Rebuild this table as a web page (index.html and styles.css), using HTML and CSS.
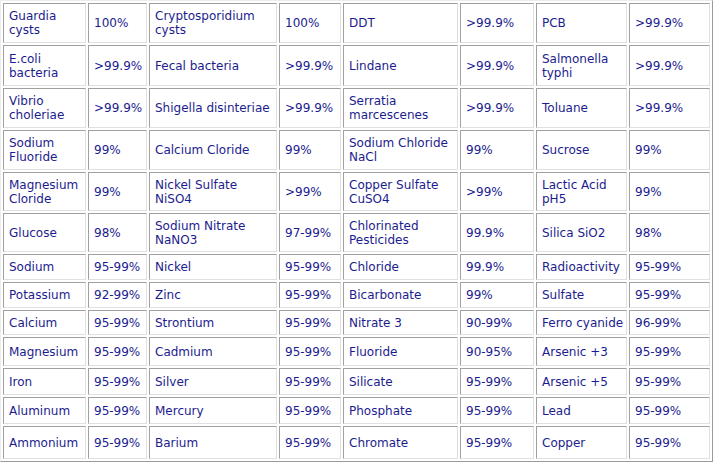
FILE: index.html
```html
<!DOCTYPE html>
<html>
<head>
<meta charset="utf-8">
<link rel="stylesheet" href="styles.css">
</head>
<body>
<table class="grid">
<colgroup>
<col class="c1"><col class="c2"><col class="c3"><col class="c4"><col class="c5"><col class="c6"><col class="c7"><col class="c8">
</colgroup>
<tbody>
<tr class="r2a"><td>Guardia cysts</td><td>100%</td><td>Cryptosporidium cysts</td><td>100%</td><td>DDT</td><td>&gt;99.9%</td><td>PCB</td><td>&gt;99.9%</td></tr>
<tr class="r2b"><td>E.coli bacteria</td><td>&gt;99.9%</td><td>Fecal bacteria</td><td>&gt;99.9%</td><td>Lindane</td><td>&gt;99.9%</td><td>Salmonella typhi</td><td>&gt;99.9%</td></tr>
<tr class="r2a"><td>Vibrio choleriae</td><td>&gt;99.9%</td><td>Shigella disinteriae</td><td>&gt;99.9%</td><td>Serratia marcescenes</td><td>&gt;99.9%</td><td>Toluane</td><td>&gt;99.9%</td></tr>
<tr class="r2a"><td>Sodium Fluoride</td><td>99%</td><td>Calcium Cloride</td><td>99%</td><td>Sodium Chloride NaCl</td><td>99%</td><td>Sucrose</td><td>99%</td></tr>
<tr class="r2c"><td>Magnesium Cloride</td><td>99%</td><td>Nickel Sulfate NiSO4</td><td>&gt;99%</td><td>Copper Sulfate CuSO4</td><td>&gt;99%</td><td>Lactic Acid pH5</td><td>99%</td></tr>
<tr class="r2c"><td>Glucose</td><td>98%</td><td>Sodium Nitrate NaNO3</td><td>97-99%</td><td>Chlorinated Pesticides</td><td>99.9%</td><td>Silica SiO2</td><td>98%</td></tr>
<tr class="r1a"><td>Sodium</td><td>95-99%</td><td>Nickel</td><td>95-99%</td><td>Chloride</td><td>99.9%</td><td>Radioactivity</td><td>95-99%</td></tr>
<tr class="r1a"><td>Potassium</td><td>92-99%</td><td>Zinc</td><td>95-99%</td><td>Bicarbonate</td><td>99%</td><td>Sulfate</td><td>95-99%</td></tr>
<tr class="r1b"><td>Calcium</td><td>95-99%</td><td>Strontium</td><td>95-99%</td><td>Nitrate 3</td><td>90-99%</td><td class="nowrap">Ferro cyanide</td><td>96-99%</td></tr>
<tr class="r1c"><td>Magnesium</td><td>95-99%</td><td>Cadmium</td><td>95-99%</td><td>Fluoride</td><td>90-95%</td><td>Arsenic +3</td><td>95-99%</td></tr>
<tr class="r1d"><td>Iron</td><td>95-99%</td><td>Silver</td><td>95-99%</td><td>Silicate</td><td>95-99%</td><td>Arsenic +5</td><td>95-99%</td></tr>
<tr class="r1d"><td>Aluminum</td><td>95-99%</td><td>Mercury</td><td>95-99%</td><td>Phosphate</td><td>95-99%</td><td>Lead</td><td>95-99%</td></tr>
<tr class="r1e"><td>Ammonium</td><td>95-99%</td><td>Barium</td><td>95-99%</td><td>Chromate</td><td>95-99%</td><td>Copper</td><td>95-99%</td></tr>
</tbody>
</table>
</body>
</html>
```

FILE: styles.css
```css
html, body {
  margin: 0;
  padding: 0;
  background: #ffffff;
}

.grid {
  width: 713px;
  table-layout: fixed;
  border-collapse: separate;
  border-spacing: 2px;
  border: 1px solid;
  border-color: #ececec #9a9a9a #9a9a9a #ececec;
  font-family: "DejaVu Sans", Verdana, sans-serif;
  font-size: 12px;
  line-height: 14px;
  color: #1c1c8e;
}

.grid td {
  box-sizing: border-box;
  border: 1px solid;
  border-color: #a0a0a0 #e0e0e0 #e0e0e0 #a0a0a0;
  padding: 0 4px 0 5px;
  vertical-align: middle;
  text-align: left;
  overflow: hidden;
}

.grid td.nowrap { white-space: nowrap; }

.c1 { width: 83px; }
.c2 { width: 59px; }
.c3 { width: 128px; }
.c4 { width: 62px; }
.c5 { width: 115px; }
.c6 { width: 74px; }
.c7 { width: 91px; }
.c8 { width: 81px; }

.r2a td { height: 40px; }
.r2b td { height: 41px; }
.r2c td { height: 39px; }
.r1a td { height: 26px; }
.r1b td { height: 25px; }
.r1c td { height: 29px; }
.r1d td { height: 27px; }
.r1e td { height: 33px; }
```
